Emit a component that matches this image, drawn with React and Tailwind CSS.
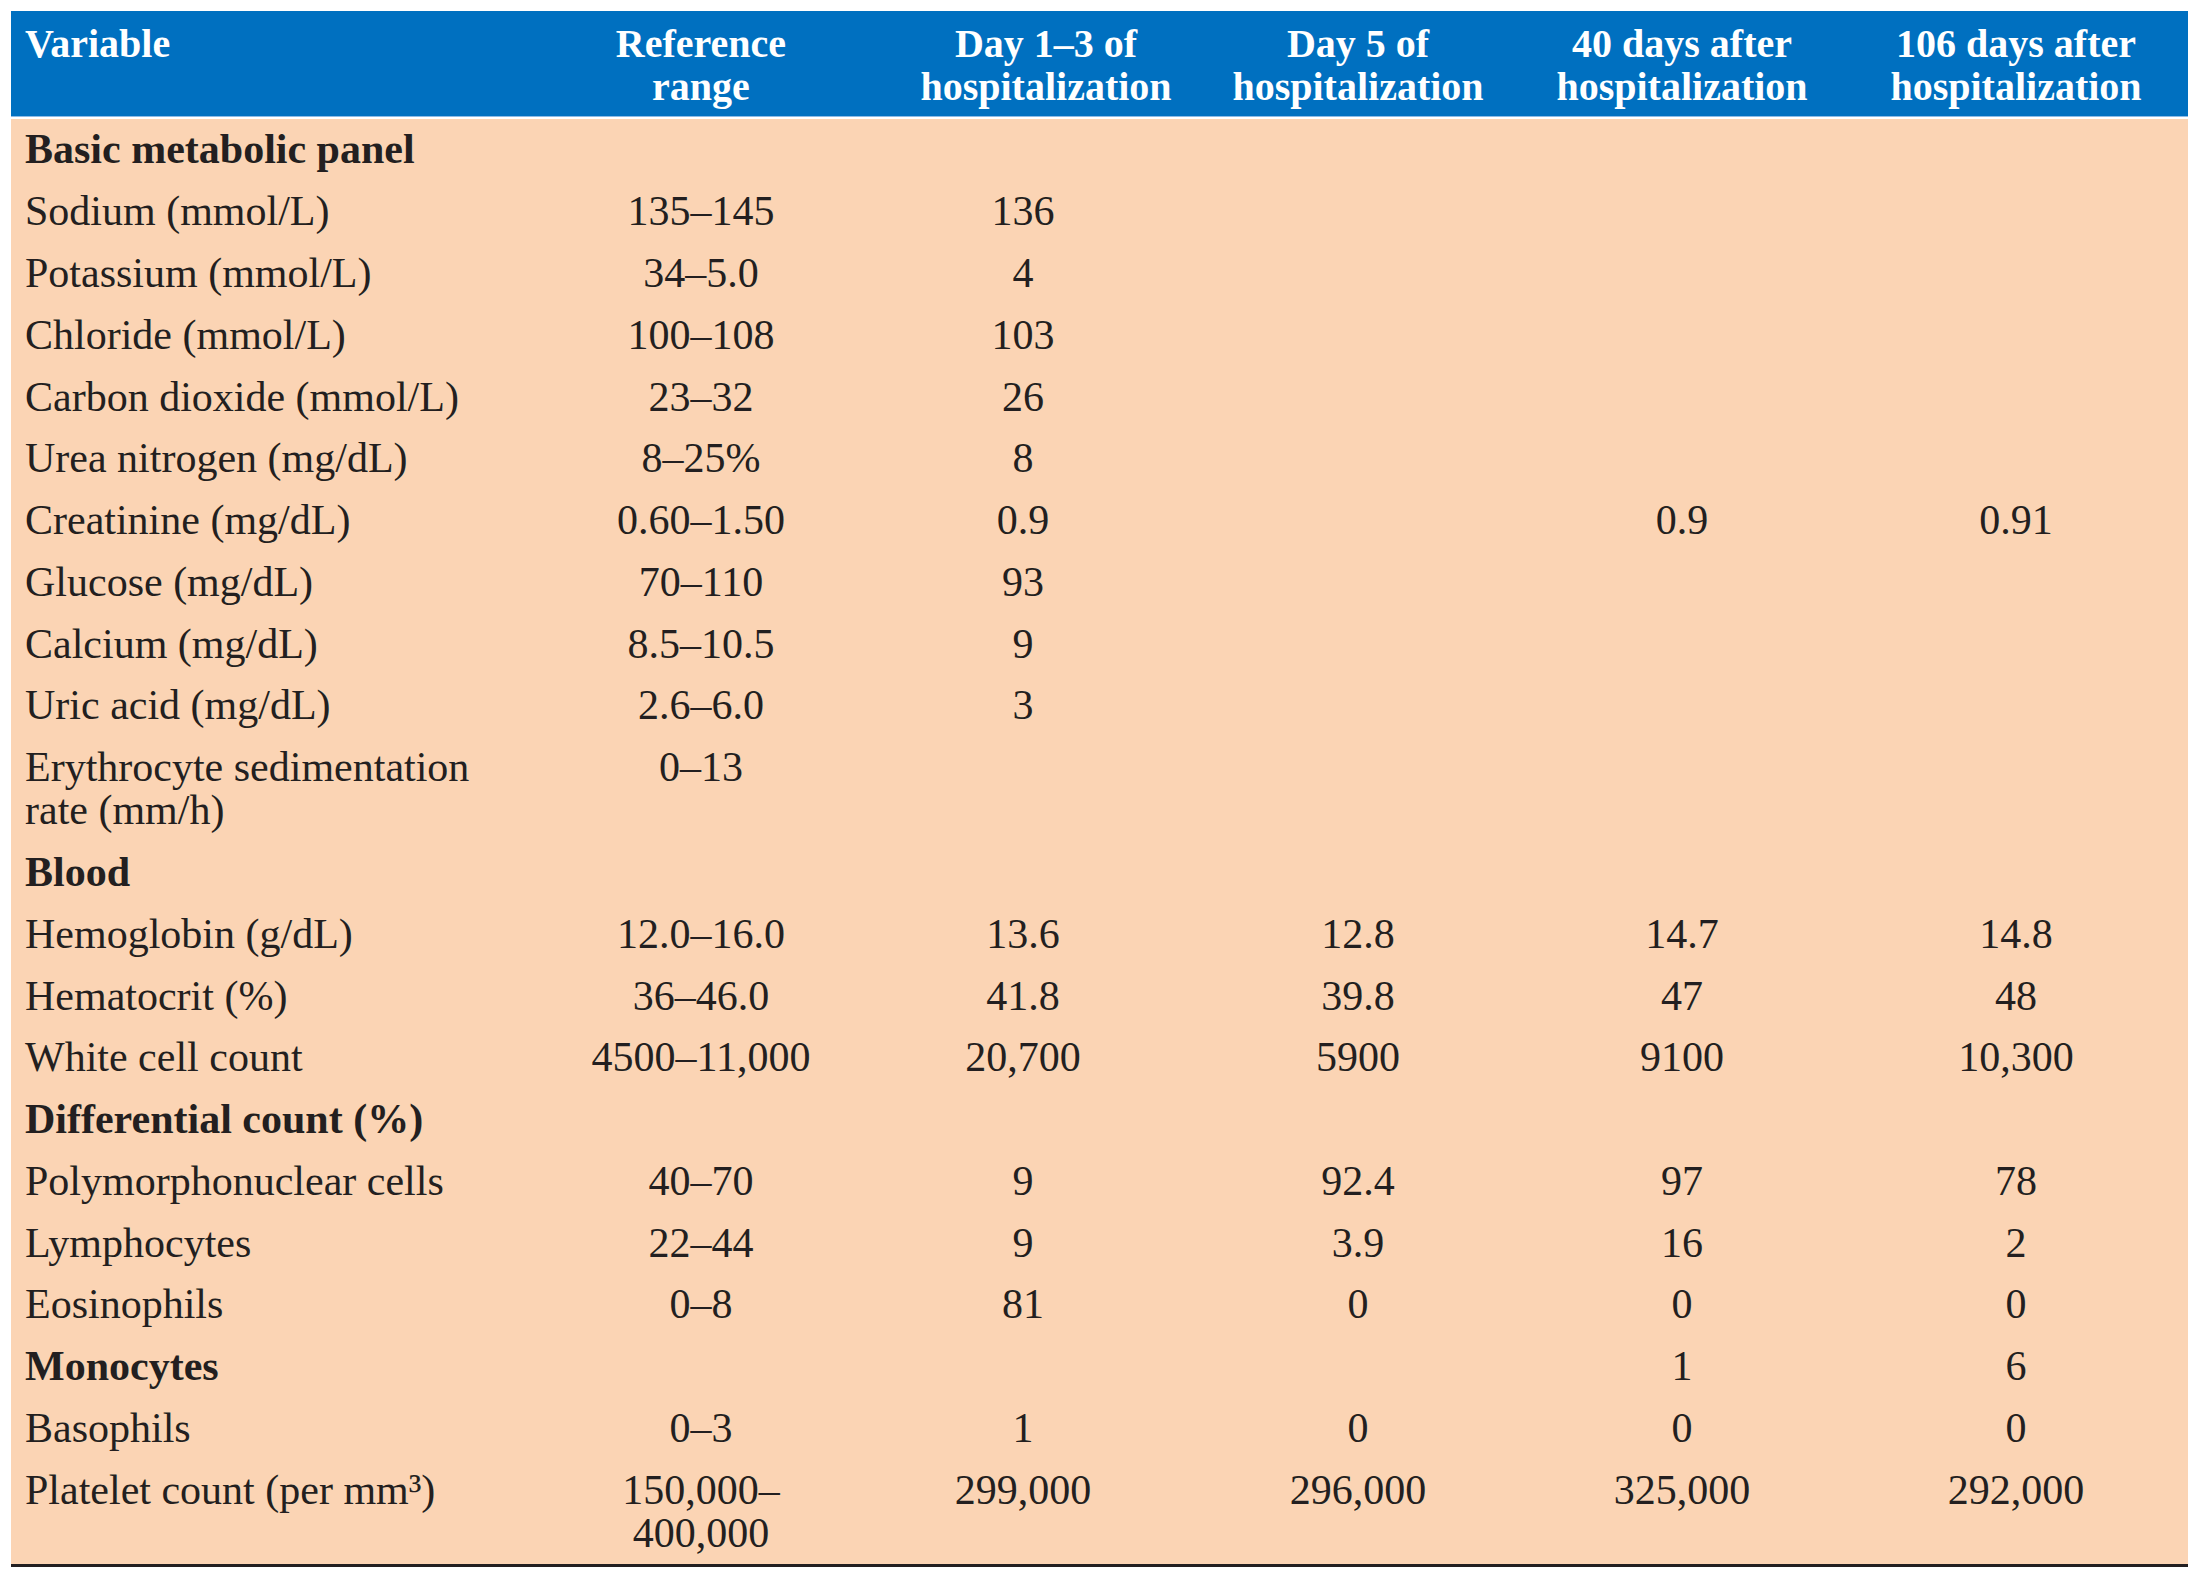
import React from 'react';

// lab values table
const grid = 'grid grid-cols-[527px_326px_332px_324px_324px_344px]';

const rows = [
  { section: 'Basic metabolic panel' },
  { name: 'Sodium (mmol/L)', vals: ['135–145', '136'] },
  { name: 'Potassium (mmol/L)', vals: ['34–5.0', '4'] },
  { name: 'Chloride (mmol/L)', vals: ['100–108', '103'] },
  { name: 'Carbon dioxide (mmol/L)', vals: ['23–32', '26'] },
  { name: 'Urea nitrogen (mg/dL)', vals: ['8–25%', '8'] },
  { name: 'Creatinine (mg/dL)', vals: ['0.60–1.50', '0.9', '', '0.9', '0.91'] },
  { name: 'Glucose (mg/dL)', vals: ['70–110', '93'] },
  { name: 'Calcium (mg/dL)', vals: ['8.5–10.5', '9'] },
  { name: 'Uric acid (mg/dL)', vals: ['2.6–6.0', '3'] },
  { name: ['Erythrocyte sedimentation', 'rate (mm/h)'], vals: ['0–13'] },
  { section: 'Blood' },
  { name: 'Hemoglobin (g/dL)', vals: ['12.0–16.0', '13.6', '12.8', '14.7', '14.8'] },
  { name: 'Hematocrit (%)', vals: ['36–46.0', '41.8', '39.8', '47', '48'] },
  { name: 'White cell count', vals: ['4500–11,000', '20,700', '5900', '9100', '10,300'] },
  { section: 'Differential count (%)' },
  { name: 'Polymorphonuclear cells', vals: ['40–70', '9', '92.4', '97', '78'] },
  { name: 'Lymphocytes', vals: ['22–44', '9', '3.9', '16', '2'] },
  { name: 'Eosinophils', vals: ['0–8', '81', '0', '0', '0'] },
  { name: 'Monocytes', bold: true, vals: ['', '', '', '1', '6'] },
  { name: 'Basophils', vals: ['0–3', '1', '0', '0', '0'] },
  { name: 'Platelet count (per mm³)', vals: [['150,000–', '400,000'], '299,000', '296,000', '325,000', '292,000'] },
];

const Lines = ({ text }) =>
  Array.isArray(text) ? (
    <>
      {text[0]}
      <br />
      {text[1]}
    </>
  ) : (
    text
  );

const Header = () => (
  <div className={`${grid} bg-[#0070c0] border-b border-[#8dbbe6] text-white font-bold text-[40px] leading-[43px]`}>
    <div className="pl-[14px] pt-[11px] pb-[8px]">Variable</div>
    <div className="text-center pt-[11px] pb-[8px]">
      Reference
      <br />
      range
    </div>
    <div className="text-center pl-[32px] pt-[11px] pb-[8px]">
      Day 1–3 of
      <br />
      hospitalization
    </div>
    <div className="text-center pt-[11px] pb-[8px]">
      Day 5 of
      <br />
      hospitalization
    </div>
    <div className="text-center pt-[11px] pb-[8px]">
      40 days after
      <br />
      hospitalization
    </div>
    <div className="text-center pt-[11px] pb-[8px]">
      106 days after
      <br />
      hospitalization
    </div>
  </div>
);

const Row = ({ row }) => {
  if (row.section) {
    return (
      <div className={grid}>
        <div className="col-span-6 pl-[14px] py-[9.4px] font-bold">{row.section}</div>
      </div>
    );
  }
  const vals = [0, 1, 2, 3, 4].map((i) => row.vals[i] || '');
  return (
    <div className={grid}>
      <div className={`pl-[14px] py-[9.4px] ${row.bold ? 'font-bold' : ''}`}>
        <Lines text={row.name} />
      </div>
      {vals.map((v, i) => (
        <div key={i} className={`text-center py-[9.4px] ${i === 1 ? 'pr-[14px]' : ''}`}>
          <Lines text={v} />
        </div>
      ))}
    </div>
  );
};

export default function App() {
  return (
    <div className="w-[2200px] h-[1576px] bg-white pt-[11px] pl-[11px] font-['Liberation_Serif',serif]">
      <div className="w-[2177px]">
        <Header />
        <div className="mt-[2px] bg-[#fbd4b4] text-[#231f20] text-[42px] leading-[43px] border-b-[3px] border-[#231f20]">
          {rows.map((r, i) => (
            <Row key={i} row={r} />
          ))}
        </div>
      </div>
    </div>
  );
}
